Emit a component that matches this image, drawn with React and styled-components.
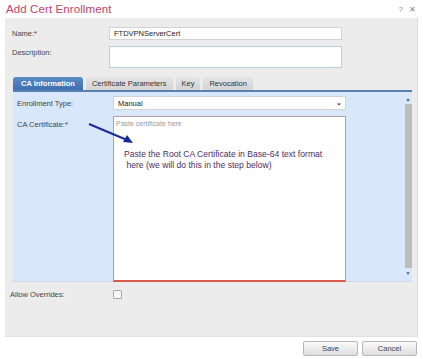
import React from "react";
import styled, { createGlobalStyle } from "styled-components";

const Global = createGlobalStyle`
  body {
    margin: 0;
    background: #ffffff;
    font-family: "Liberation Sans", Arial, sans-serif;
  }
`;

const Dialog = styled.div`
  width: 423px;
  height: 359px;
  background: #fff;
  display: flex;
  flex-direction: column;
`;

const TitleBar = styled.div`
  height: 18px;
  display: flex;
  align-items: center;
  justify-content: space-between;
  padding: 0 7px 0 6px;
`;

const Title = styled.div`
  color: #c2416b;
  font-size: 11.5px;
  letter-spacing: 0.1px;
`;

const WinButtons = styled.div`
  display: flex;
  gap: 6px;
  color: #888;
  font-size: 8px;
`;

const Panel = styled.div`
  margin: 0 5px;
  height: 319px;
  background: #ececec;
  border-right: 1px solid #dcdcdc;
  border-bottom: 1px solid #e2e2e2;
  box-sizing: border-box;
  padding: 9px 5px 0 0;
  display: flex;
  flex-direction: column;
`;

const Row = styled.div`
  display: flex;
  align-items: ${(p) => (p.$top ? "flex-start" : "center")};
  padding-left: ${(p) => p.$indent ?? 7}px;
  margin-bottom: ${(p) => p.$gap ?? 0}px;
  margin-top: ${(p) => p.$mt ?? 0}px;
`;

const Label = styled.div`
  width: ${(p) => p.$w || 97}px;
  flex-shrink: 0;
  font-size: 7.5px;
  color: #444;
  padding-top: ${(p) => p.$pt || 0}px;
`;

const TextInput = styled.div`
  width: 233px;
  height: ${(p) => p.$h || 13}px;
  box-sizing: border-box;
  background: #fff;
  border: 1px solid ${(p) => p.$border || "#d2d2d2"};
  font-size: 7.5px;
  color: #222;
  padding: 2px 4px;
  display: flex;
  align-items: center;
`;

const TabBlock = styled.div`
  margin: 9px 0 0 8px;
  display: flex;
  flex-direction: column;
`;

const Tabs = styled.div`
  display: flex;
  gap: 3px;
  height: 13px;
  align-items: flex-end;
`;

const Tab = styled.div`
  height: 13px;
  box-sizing: border-box;
  padding: 0 ${(p) => p.$pad ?? 6}px;
  border-radius: 3px 3px 0 0;
  font-size: 7.5px;
  display: flex;
  align-items: center;
  color: ${(p) => (p.$active ? "#fff" : "#333")};
  font-weight: ${(p) => (p.$active ? "bold" : "normal")};
  background: ${(p) =>
    p.$active
      ? "linear-gradient(#5b8bc6, #3e6fae)"
      : "linear-gradient(#e4e4e4, #d4d4d4)"};
`;

const TabBody = styled.div`
  border-top: 2px solid #5a7fb3;
  background: #d8e7fa;
  height: 192px;
  box-sizing: border-box;
  display: flex;
  border-bottom: 1px solid #cfd9e6;
`;

const TabForm = styled.div`
  flex: 1;
  padding: 4px 0 0 4px;
  display: flex;
  flex-direction: column;
`;

const SelectBox = styled(TextInput)`
  justify-content: space-between;
  padding-right: 3px;
  height: 14px;
`;

const Chevron = styled.span`
  font-size: 7px;
  color: #444;
  font-weight: bold;
`;

const CertArea = styled.div`
  width: 233px;
  height: 166px;
  box-sizing: border-box;
  background: #fff;
  border: 1px solid #b99aa3;
  border-bottom: 2px solid #d9594a;
  padding: 3px 2px;
  position: relative;
`;

const Placeholder = styled.div`
  font-size: 7px;
  color: #9a9a9a;
`;

const Note = styled.div`
  margin: 22px 0 0 8px;
  font-size: 8.6px;
  line-height: 11px;
  color: #4e2f5e;
  white-space: pre;
`;

const Arrow = styled.svg`
  position: absolute;
  left: -27px;
  top: 5px;
  overflow: visible;
`;

const Scrollbar = styled.div`
  width: 8px;
  margin: 4px 0 5px 0;
  display: flex;
  flex-direction: column;
  align-items: center;
  font-size: 5px;
  color: #555;
`;

const Thumb = styled.div`
  flex: 1;
  width: 7px;
  background: #bdbdbd;
  margin: 2px 0;
`;

const Checkbox = styled.div`
  width: 7px;
  height: 7px;
  border: 1px solid #aaa;
  border-radius: 1px;
  background: #f6f6f6;
`;

const Footer = styled.div`
  display: flex;
  justify-content: flex-end;
  gap: 4px;
  padding: 4px 6px 0 0;
`;

const Button = styled.div`
  width: 55px;
  height: 15px;
  box-sizing: border-box;
  border: 1px solid #b8b8b8;
  border-radius: 2px;
  background: linear-gradient(#fafafa, #dedede);
  font-size: 7.5px;
  color: #444;
  display: flex;
  align-items: center;
  justify-content: center;
`;

export default function App() {
  return (
    <Dialog>
      <Global />
      <TitleBar>
        <Title>Add Cert Enrollment</Title>
        <WinButtons>
          <span>?</span>
          <span>✕</span>
        </WinButtons>
      </TitleBar>
      <Panel>
        <Row $gap={6}>
          <Label>Name:*</Label>
          <TextInput>FTDVPNServerCert</TextInput>
        </Row>
        <Row $top>
          <Label $pt={2}>Description:</Label>
          <TextInput $h={22} $border="#b9cfe2" />
        </Row>
        <TabBlock>
          <Tabs>
            <Tab $active $pad={8}>CA Information</Tab>
            <Tab>Certificate Parameters</Tab>
            <Tab $pad={6}>Key</Tab>
            <Tab>Revocation</Tab>
          </Tabs>
          <TabBody>
            <TabForm>
              <Row $indent={0} $gap={6}>
                <Label $w={96}>Enrollment Type:</Label>
                <SelectBox>
                  Manual
                  <Chevron>⌄</Chevron>
                </SelectBox>
              </Row>
              <Row $indent={0} $top>
                <Label $w={96} $pt={4}>CA Certificate:*</Label>
                <CertArea>
                  <Arrow width="50" height="25">
                    <line x1="2" y1="2" x2="40" y2="18" stroke="#1a2a9a" strokeWidth="2" />
                    <polygon points="46,21 36,20 40,13" fill="#1a2a9a" />
                  </Arrow>
                  <Placeholder>Paste certificate here</Placeholder>
                  <Note>
                    {"Paste the Root CA Certificate in Base-64 text format\n here (we will do this in the step below)"}
                  </Note>
                </CertArea>
              </Row>
            </TabForm>
            <Scrollbar>
              <span>▲</span>
              <Thumb />
              <span>▼</span>
            </Scrollbar>
          </TabBody>
        </TabBlock>
        <Row $indent={5} $mt={8}>
          <Label $w={103}>Allow Overrides:</Label>
          <Checkbox />
        </Row>
      </Panel>
      <Footer>
        <Button>Save</Button>
        <Button>Cancel</Button>
      </Footer>
    </Dialog>
  );
}
